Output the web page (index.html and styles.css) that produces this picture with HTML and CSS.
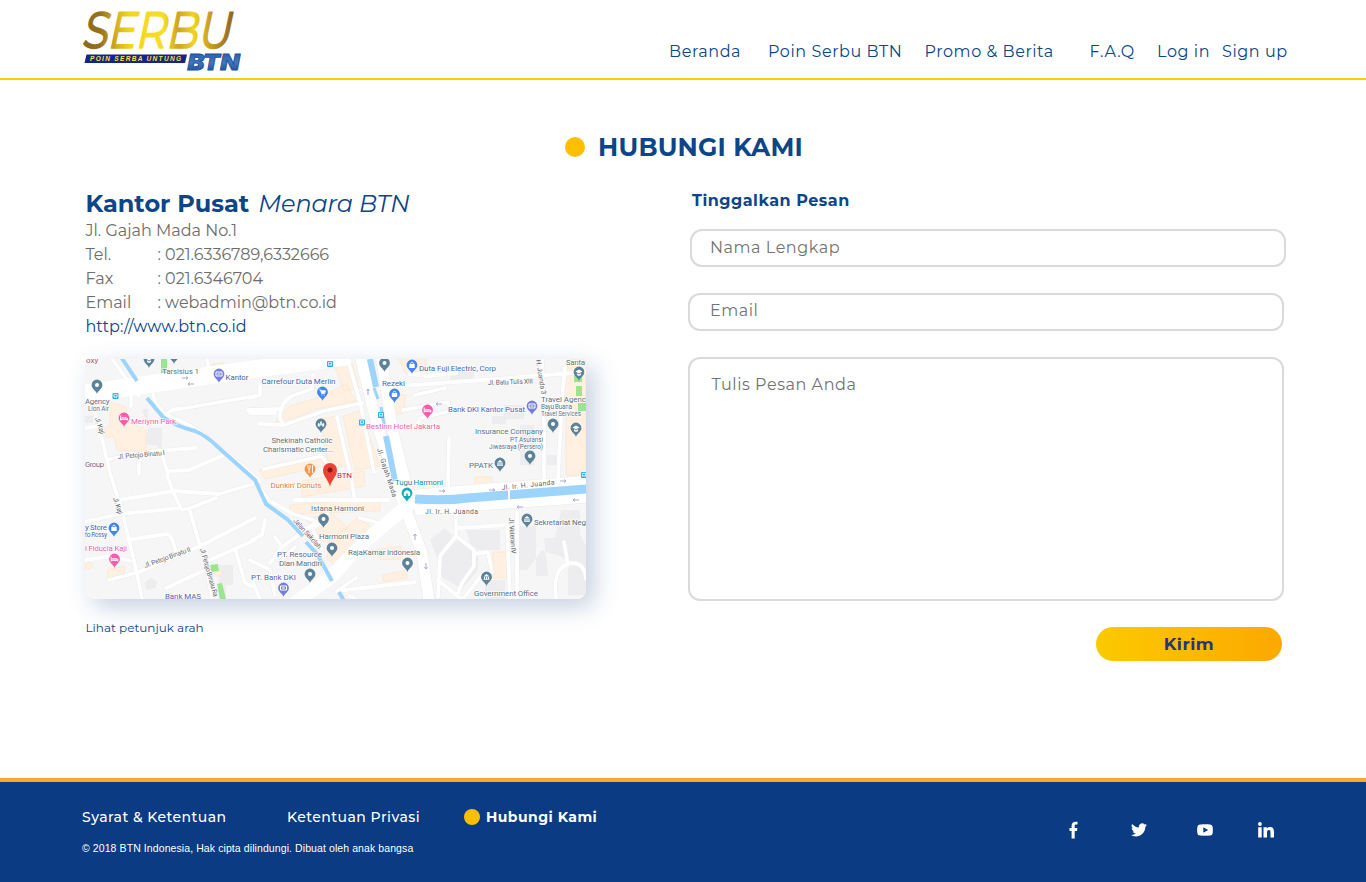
FILE: index.html
```html
<!DOCTYPE html>
<html lang="id">
<head>
<meta charset="utf-8">
<title>Serbu BTN - Hubungi Kami</title>
<link rel="stylesheet" href="styles.css">
</head>
<body>
<header class="header">
  <svg class="logo" width="162" height="66" viewBox="82 8 162 66">
    <defs>
      <linearGradient id="gold" x1="0" x2="1" y1="0.5" y2="0.4">
        <stop offset="0" stop-color="#8a6a18"/><stop offset=".1" stop-color="#96701a"/><stop offset=".22" stop-color="#d9b422"/><stop offset=".3" stop-color="#f3d51c"/>
        <stop offset=".52" stop-color="#f6df25"/><stop offset=".62" stop-color="#d0a41d"/><stop offset=".72" stop-color="#f0d426"/><stop offset=".84" stop-color="#c49a20"/><stop offset="1" stop-color="#8a6220"/>
      </linearGradient>
      <linearGradient id="steel" x1="0" x2="0" y1="0" y2="1"><stop offset="0" stop-color="#2458a8"/><stop offset=".5" stop-color="#3f78bd"/><stop offset="1" stop-color="#173f8a"/></linearGradient>
    </defs>
    <text class="logo-word" transform="translate(81 48) skewX(-12)" textLength="149" lengthAdjust="spacingAndGlyphs" fill="url(#gold)" stroke="url(#gold)">SERBU</text>
    <path d="M86.500 54.500H187l-2 8.500H84.500z" fill="#14248a"/>
    <text class="logo-tag" x="90" y="61" textLength="91">POIN SERBA UNTUNG</text>
    <text class="logo-btn" x="187.500" y="70" textLength="52" lengthAdjust="spacingAndGlyphs" fill="url(#steel)">BTN</text>
  </svg>
  <nav class="nav">
    <a>Beranda</a><a>Poin Serbu BTN</a><a>Promo &amp; Berita</a><a>F.A.Q</a><a>Log in</a><a>Sign up</a>
  </nav>
</header>

<main class="main">
  <h1 class="title"><span class="title-dot"></span><span>HUBUNGI KAMI</span></h1>
  <div class="columns">
    <section class="office">
      <h2 class="office-name"><b>Kantor Pusat</b><i>Menara BTN</i></h2>
      <p class="line">Jl. Gajah Mada No.1</p>
      <div class="line row"><span>Tel.</span><span>: 021.6336789,6332666</span></div>
      <div class="line row"><span>Fax</span><span>: 021.6346704</span></div>
      <div class="line row"><span>Email</span><span>: webadmin@btn.co.id</span></div>
      <a class="line site">http://www.btn.co.id</a>
      <svg class="map" viewBox="85 359 501 240" width="501" height="240">
        <defs>
          <g id="drop"><path d="M0 0C-.8-3.500-5.400-5-5.400-9a5.400 5.400 0 0 1 10.800 0C5.400-5 .8-3.500 0 0z"/></g>
          <g id="poi"><use href="#drop" fill="#5b8299"/><circle cy="-9" r="2" fill="#fff"/></g>
          <g id="office"><use href="#drop" fill="#5b8299"/><path d="M-3-9.500L0-12l3 2.500zM-2.600-9h1.200v2h-1.200zM-.6-9H.6v2H-.6zM1.400-9h1.200v2H1.400zM-3-6.700h6v.8h-6z" fill="#fff"/></g>
          <g id="school"><use href="#drop" fill="#5b8299"/><path d="M-3.500-9.500L0-11.500l3.500 2L0-7.600zM-2-7.700L0-6.500l2-1.200V-6L0-5l-2-1z" fill="#fff"/></g>
          <g id="church"><use href="#drop" fill="#5b8299"/><path d="M-3.200-6.500V-9l1-1.300 1 1.300v2.500zM1.200-6.500V-9l1-1.300 1 1.300v2.500zM-.8-7.500V-11L0-12l.8 1v3.500z" fill="#fff"/></g>
          <g id="shop"><use href="#drop" fill="#4285f4"/><path d="M-2.700-10h5.400v4h-5.400z" fill="#fff"/><path d="M-1.300-9.500v-1a1.300 1.300 0 0 1 2.600 0v1" fill="none" stroke="#fff" stroke-width=".8"/></g>
          <g id="cart"><use href="#drop" fill="#4285f4"/><path d="M-3.300-11.300h1.200l1.200 3.800h3l.9-2.800h-4.600" fill="none" stroke="#fff" stroke-width=".9"/><path d="M-1.500-10h4l-.7 2h-2.700z" fill="#fff"/><circle cx="-.5" cy="-6" r=".6" fill="#fff"/><circle cx="1.800" cy="-6" r=".6" fill="#fff"/></g>
          <g id="bank"><use href="#drop" fill="#7680dc"/><path d="M-3-11h6v4h-6z" fill="none" stroke="#fff"/><path d="M-1.500-9h3" stroke="#fff"/></g>
          <g id="hotel"><use href="#drop" fill="#f45dab"/><path d="M-3.300-11.500v5M3.300-9v2.500M-3.300-7.700h6.600" stroke="#fff"/><path d="M-2.300-9.800h5v1.300h-5z" fill="#fff"/></g>
          <g id="bus"><rect x="-3" y="-3" width="6" height="6" rx="1" fill="#18b4ed"/><path d="M-1.600-1.700h3.200v2.500h-3.200zM-1.500 1.500h.8M.7 1.500h.8" stroke="#fff" stroke-width=".8" fill="none"/></g>
          <path id="arrow" d="M-3 0h6M1-1.500L3 0 1 1.500" stroke="#a5add0" stroke-width="1" fill="none"/>
          <g id="streets" fill="none" stroke-linecap="round" stroke-linejoin="round">
            <path d="M112 359l27 37M167 375l-2-16M209 372l-2-13M131 394v12M153 395q4 14 16 21 22 8 41 23l50 42M168 413q3-4 12-4l75-13M248 410h15M250 413h25M250 398l10-3V386"/>
            <path d="M94 410l6 20 10 43 12 38 14 58 6 30M85 428l14-2M110 459l45-8 41-3M139 460v14M162 455l6 19M169 471l20-1 33-14"/>
            <path d="M119 500l55-9 45 3 34-10M167 475l6 17 9 18 8-2 26-10M190 511l8 28 8 24 6 36M85 522l34-8 61-6M128 540l38-6q4 0 6 5l5 16"/>
            <path d="M109 580l30-8 63-27 53-27M85 560l25-4 20 5M166 588l37-17M210 560l45-20M236 552l9 31 7 3M252 540l10-5 3-15M250 560l20 10 5 25M252 580l8 19M275 537l7 10-12 16M282 547l12-9 10-10M281 561l14-14M292 599l18-9 16-15-4-14-10-8"/>
            <path d="M313 375l-1 14-20 7q-12 6-12 22l2 4M250 410l31-1M259 424l25 1 40-14 38-8M348 360l12 42 14 70M337 417l14 60 4 24M264 469l54-12M320 455l14 16M294 500h95M254 481l16 20 23 13 20 6"/>
            <path d="M388 387l80-6 118-9M410 374l18 2 28-3M403 410l45-8 3 9-30 7-4 6M542 359l2 60v75M565 368l-3 30-4 80M449 438l-1 50M415 395l30-7"/>
            <path d="M456 513v23l18 14v16l-12 17-5 12M456 536l-16 20-2 41M438 580l24 20 24-30M458 528l49-3 3 74M517 512v87M474 554l14-2 4 20M556 599q-4-34 16-36 13 0 14 16M568 565l-4-23M356 578l-19 13 78-9M350 596l5 3"/>
            <path d="M328 520l-16 8 10 21M360 518l30 8M292 540l35-26"/>
          </g>
          <g id="avenues" fill="none" stroke-linecap="round">
            <path d="M360 355l17 70 28 83 17 45 8 55"/><path d="M381 355l12 78 14 55"/><path d="M411 503L365 541l-35 37-38 27" stroke-width="14"/><path d="M405 496l70-6 115-9M420 510l60-5 110-8"/><path d="M82 394l82-12 84-12 102-14" stroke-width="18" stroke-linecap="butt"/>
          </g>
          <clipPath id="frame"><rect x="85" y="359" width="501" height="240"/></clipPath>
        </defs>
        <g clip-path="url(#frame)">
          <rect x="85" y="359" width="501" height="240" fill="#f6f6f6"/>
          <g fill="#ededef"><path d="M85 416h8v7h-8zM142 409h6v22l-6 14h14l6 8V428h-14zM450 368h24v14h-24zM504 405h20v14h-20zM520 425h14v40h-14zM492 416h14v8h-14zM547 455h11v10h-11zM520 526h16v50h12l-4-38h11l6-28h19v24l8 16v45h-20V559l-26-9-15 20h-12zM466 530h34v20h-28zM458 540l20 10v20l-16 19-20-12-1-23zM430 540l15-12 10 10-16 24zM145 582l6-4 6 3-1 7-10 2zM219 565h14v20h-7v14h-8zM485 580h20v19h-20z"/></g>
          <g fill="#fff0e1" stroke="#fce5cc" stroke-width=".7"><path d="M110 402l16 5 2 15 18 8v21h-28l-4-14h-9v-10l5-1zM163 378l30-4-2 13-26 3zM212 364l12-1v7h-12zM335 367l18-3 6 24-15 3zM290 406l30-9 26-13 10 17-40 8-21 9-20 4zM320 419l18-3 13 49-22 4zM343 416l17-5 20 55-25 4zM259 470l63-12 8 7-65 14zM302 481l62-10 1 15-63 11zM290 505l90-7v13l-90 3zM307 518l25-4 16 14-22 14-12-5zM328 543l30-26 17 13-40 35-8-6zM373 550l28-4v13l-20 1zM382 575l25-5v8l-23 4zM569 359h17v116h-20v-75h-6zM475 477h17v11h-17zM493 552h14v26h-14zM107 570l17-4v10l-16 2zM398 359h28v10l-20 5zM392 395h14l-3 18-12 3zM85 561l8 3-3 5h-5zM214 573l8-3v5l-7 1z"/></g>
          <g fill="#9be68d"><path d="M161 359h6v16h-6zM574 373h8v9h-8zM576 386h6v10h-6zM578 403h8v8h-8zM210 565l8-1 1 7-8 1zM217 584l5-1 4 16h-6z"/></g>
          <g stroke="#e8e8ea" stroke-width="4.600"><use href="#streets"/></g>
          <g stroke="#e8e8ea" stroke-width="12"><use href="#avenues"/></g>
          <g stroke="#fff" stroke-width="3.800"><use href="#streets"/></g>
          <g stroke="#fff" stroke-width="11"><use href="#avenues"/></g>
          <path d="M161 359h6v14h-6z" fill="#9be68d"/>
          <g fill="none" stroke="#9cd4fc" stroke-width="4">
            <path d="M121 357l16 24M147 398l16 19q12 9 32 14 12 5 23 16l37 33 11 24 21 15 16 17"/><path d="M306 542l11 12 15 27M339 592l5 9"/><path d="M370 359l6 28M386 436l9 45" stroke-width="6"/><path d="M374 388l4 11M381 407l4 22" stroke-width="3"/><path d="M415 499q30 2 53-1l119-9" stroke-width="9"/>
          </g>
          <path d="M509 488v15" stroke="#fff" stroke-width="2"/>
          <use href="#arrow" x="185" y="378"/><use href="#arrow" transform="translate(191 384) rotate(180)"/><use href="#arrow" transform="translate(368 392) rotate(-90)"/><use href="#arrow" x="442" y="491"/><use href="#arrow" x="492" y="490"/><use href="#arrow" x="563" y="481"/><use href="#arrow" transform="translate(520 507) rotate(180)"/><use href="#arrow" transform="translate(576 500) rotate(180)"/><use href="#arrow" transform="translate(415 537) rotate(-90)"/><use href="#arrow" transform="translate(426 566) rotate(90)"/><use href="#arrow" transform="translate(439 404) rotate(180)"/>
          <use href="#poi" x="97" y="394"/><use href="#school" x="149" y="368"/><use href="#school" x="174" y="364"/><use href="#bank" x="219" y="383"/><use href="#hotel" x="124" y="427"/><use href="#bus" x="115.500" y="396"/><use href="#bus" x="330" y="364"/><use href="#bus" x="381" y="415"/><use href="#bus" x="362" y="422.500"/><use href="#bus" x="584" y="475"/>
          <use href="#cart" x="322.500" y="401"/><use href="#shop" x="394.500" y="403"/><use href="#poi" x="384.500" y="372"/><use href="#shop" x="412" y="374"/><use href="#hotel" x="427.500" y="419"/><use href="#church" x="321" y="433"/><use href="#bank" x="532" y="415"/><use href="#school" x="579" y="381"/><use href="#poi" x="553" y="433"/><use href="#school" x="576" y="437"/><use href="#poi" x="530" y="465"/><use href="#office" x="500" y="472"/>
          <use href="#shop" x="114" y="537"/><use href="#hotel" x="114.500" y="568"/><use href="#poi" x="323.500" y="528"/><use href="#poi" x="332" y="557"/><use href="#poi" x="310" y="583"/><use href="#bank" x="283.500" y="597"/><use href="#poi" x="407.500" y="572"/><use href="#office" x="527" y="528"/><use href="#office" x="486.500" y="586"/>
          <use href="#drop" x="310" y="478" fill="#f79448"/><path d="M308 465v3q0 1 1 1v4M310 465v3q0 1-1 1M312.500 465v8" stroke="#fff" stroke-width=".9" fill="none"/>
          <use href="#drop" x="407" y="502" fill="#10aab8"/><path d="M403.800 492l3.200-2 3.200 2v4h-6.400z" fill="#fff"/><path d="M406.200 493.500h1.600v2.500h-1.600z" fill="#10aab8"/>
          <path d="M330 487c-1-7-7-10-7-17a7 7 0 0 1 14 0c0 7-6 10-7 17z" fill="#ea4335"/><circle cx="330" cy="470" r="2.500" fill="#831a14"/>
          <g class="labels">
            <text x="86" y="363" fill="#c0506a">oxy</text>
            <text x="162" y="373.500" textLength="37">Tarsisius 1</text>
            <text x="225.500" y="379.500" textLength="23" fill="#5058a8">Kantor</text>
            <text x="85" y="404" textLength="24.500">Agency</text><text class="small" x="88" y="411" textLength="21">Lion Air</text>
            <text x="131" y="424" textLength="45" fill="#f45dab">Merlynn Park</text>
            <text x="85" y="467" textLength="19">Group</text>
            <text x="261.500" y="383.500" textLength="74" fill="#3d68b8">Carrefour Duta Merlin</text>
            <text x="382" y="386" textLength="23" fill="#3d68b8">Rezeki</text>
            <text x="419" y="371" textLength="77" fill="#3d68b8">Duta Fuji Electric, Corp</text>
            <text class="road" x="488" y="385" textLength="45" transform="rotate(-2 488 385)">Jl. Batu Tulis XIII</text>
            <text class="road" x="536" y="360" textLength="35" transform="rotate(81 536 360)">H. Juanda 3</text>
            <text x="566" y="364.500" textLength="19">Santa</text>
            <text x="541" y="402" textLength="45">Travel Agenc</text><text class="small" x="541" y="409" textLength="31">Bayu Buana</text><text class="small" x="541" y="416" textLength="40">Travel Services</text>
            <text x="448" y="411.500" textLength="77" fill="#5961b4">Bank DKI Kantor Pusat</text>
            <text x="366" y="429" textLength="74" fill="#f45dab">Bestinn Hotel Jakarta</text>
            <text x="475" y="434" textLength="68">Insurance Company</text><text class="small" x="510" y="441.500" textLength="33">PT Asuransi</text><text class="small" x="489" y="448.500" textLength="54">Jiwasraya (Persero)</text>
            <text x="469" y="468" textLength="24">PPATK</text>
            <text x="271.500" y="442.500" textLength="61">Shekinah Catholic</text><text x="263" y="451.500" textLength="70">Charismatic Center...</text>
            <text x="337" y="478" textLength="15" fill="#c5283c">BTN</text><text x="270.500" y="488" textLength="51" fill="#df7c45">Dunkin' Donuts</text>
            <text x="395" y="485" textLength="48" fill="#168b96">Tugu Harmoni</text>
            <text class="road" x="502" y="490" textLength="53" transform="rotate(-6 502 490)">Jl. Ir. H. Juanda</text><text class="road" x="425" y="513.500" textLength="53">Jl. Ir. H. Juanda</text>
            <text x="311" y="510.500" textLength="53">Istana Harmoni</text><text x="319" y="539" textLength="50">Harmoni Plaza</text>
            <text x="277" y="557" textLength="45">PT. Resource</text><text x="279" y="565.500" textLength="43">Dian Mandiri</text><text x="251" y="580" textLength="45" fill="#5961b4">PT. Bank DKI</text>
            <text x="348" y="555" textLength="72">RajaKamar Indonesia</text><text x="534" y="524.500" textLength="52">Sekretariat Neg</text><text x="474" y="595.500" textLength="64">Government Office</text>
            <text x="85" y="529.500" textLength="22" fill="#3d68b8">y Store</text><text class="small" x="85" y="537" textLength="22" fill="#3d68b8">to Rossy</text><text x="85" y="550.500" textLength="42" fill="#f45dab">l Fiducia Kaji</text><text x="165" y="599" textLength="36" fill="#5961b4">Bank MAS</text>
            <text class="road" x="118" y="459" textLength="47" transform="rotate(-5 118 459)">Jl. Petojo Binatu I</text><text class="road" x="145" y="568" textLength="49" transform="rotate(-20 145 568)">Jl. Petojo Binatu II</text>
            <text class="road" x="200" y="549" textLength="50" transform="rotate(74 200 549)">Jl. Petojo Binatu Ra</text>
            <text class="road" x="95" y="418" textLength="17.500" transform="rotate(72 95 418)">Jl. Kaji</text><text class="road" x="113" y="498" textLength="17.500" transform="rotate(72 113 498)">Jl. Kaji</text>
            <text class="road" x="377" y="449" textLength="51" transform="rotate(72 377 449)">Jl. Gajah Mada</text><text class="road" x="293" y="521" textLength="38" transform="rotate(48 293 521)">Jalan Sekolah</text><text class="road" x="509" y="518" textLength="36" transform="rotate(86 509 518)">Jl. Veteran IV</text>
          </g>
        </g>
      </svg>
      <a class="directions">Lihat petunjuk arah</a>
    </section>

    <form class="form">
      <label class="form-title">Tinggalkan Pesan</label>
      <input class="field field-name" placeholder="Nama Lengkap">
      <input class="field" placeholder="Email">
      <textarea class="field message" placeholder="Tulis Pesan Anda"></textarea>
      <button class="send" type="button">Kirim</button>
    </form>
  </div>
</main>

<footer class="footer">
  <div>
    <div class="footer-links"><a>Syarat &amp; Ketentuan</a><a>Ketentuan Privasi</a><a class="current"><span class="dot"></span>Hubungi Kami</a></div>
    <p class="copyright">© 2018 BTN Indonesia, Hak cipta dilindungi. Dibuat oleh anak bangsa</p>
  </div>
  <div class="social">
    <svg width="10" height="18" viewBox="0 0 10 18"><path d="M2.600 17.500V10H.5V7h2.100V4.700C2.600 2 4.200.7 6.500.7c1 0 1.700.1 2 .1v2.700H7c-1.100 0-1.300.6-1.300 1.400V7h2.700L8 10H5.700v7.500z"/></svg>
    <svg width="16" height="14" viewBox="0 0 24 20"><path d="M24 2.400c-.9.400-1.800.7-2.800.8 1-.6 1.800-1.600 2.200-2.700-1 .6-2 1-3.100 1.200A4.900 4.900 0 0 0 11.900 6.200C7.800 6 4.200 4 1.700 1A4.900 4.900 0 0 0 3.200 7.600c-.8 0-1.600-.2-2.200-.6 0 2.300 1.600 4.400 3.900 4.900-.7.200-1.500.2-2.200.1.600 2 2.400 3.400 4.600 3.400A9.900 9.900 0 0 1 0 17.500C2.200 18.900 4.800 19.700 7.500 19.700c9.100 0 14.300-7.700 14-14.600.9-.8 1.800-1.700 2.500-2.700z"/></svg>
    <svg width="16" height="12" viewBox="0 0 16 12"><path fill-rule="evenodd" d="M3 .4C8 0 10 .1 13 .4q2.500.1 2.700 2.600.3 3 0 6-.2 2.500-2.700 2.600-5 .3-10 0Q.5 11.500.3 9q-.3-3 0-6Q.5.500 3 .4zM6.300 3.200v5.600L11.200 6z"/></svg>
    <svg width="16" height="16" viewBox="0 0 16 16"><circle cx="1.900" cy="2" r="1.900"/><path d="M.2 5.300h3.500v10.200H.2zM5.500 5.300h3.400v1.300c.5-.9 1.600-1.600 3.100-1.600 3.300 0 4 2.200 4 5v5.500h-3.500v-4.900c0-1.300 0-2.700-1.600-2.700S9 9.200 9 10.600v4.900H5.500z"/></svg>
  </div>
</footer>
</body>
</html>
```
FILE: styles.css
```css
* { box-sizing: border-box; }
body { margin: 0; background: #fff; color: #0c4588; font-family: "Montserrat", Inter, "Liberation Sans", sans-serif; }
h1, h2, p { margin: 0; }

.header { display: flex; justify-content: space-between; align-items: flex-start; height: 80px; padding: 8px 76px 0 82px; border-bottom: 2px solid #fdd000; }
.logo { display: block; overflow: visible; }
.logo-word { font-size: 51px; font-weight: 400; stroke-width: 1.600px; stroke-linejoin: round; }
.logo-tag { font: italic bold 6.500px "Liberation Sans", sans-serif; fill: #ffe32e; }
.logo-btn { font: italic 900 21px Inter, sans-serif; stroke: #1f4f9c; stroke-width: .8px; }
.nav { display: grid; grid-template-columns: 99px 156.500px 165px 67.500px 65px 68px; padding-top: 32px; font-size: 16px; line-height: 24px; letter-spacing: .58px; white-space: nowrap; }

.main { height: 698px; padding: 51px 80px 0 85px; }
.title { display: flex; justify-content: center; align-items: center; gap: 13px; height: 32px; margin-right: 3px; font-size: 25px; font-weight: 700; letter-spacing: .2px; }
.title-dot { width: 20px; height: 20px; border-radius: 50%; background: #fdbf00; }
.columns { display: grid; grid-template-columns: 502px 598px; column-gap: 101px; margin-top: 27px; }
.office { display: flex; flex-direction: column; align-items: flex-start; }
.office-name { display: flex; gap: 9px; height: 29px; padding-left: .5px; font-size: 24px; line-height: 28px; white-space: nowrap; }
.office-name b { font-weight: 700; }
.office-name i { font-weight: 400; letter-spacing: -.15px; }
.line { height: 24px; padding-left: .5px; line-height: 24px; font-size: 16px; color: #6d6d6d; }
.row { display: grid; grid-template-columns: 72px auto; }
.site { color: #0c4588; }
.map { display: block; margin-top: 20px; border-radius: 4px 4px 9px 9px; box-shadow: 8px 8px 24px rgba(30, 75, 140, .26); }
.labels { font-family: Roboto, sans-serif; font-size: 8px; fill: #587184; stroke: #fff; stroke-width: 1.400px; paint-order: stroke; stroke-opacity: .75; }
.labels .small { font-size: 6.500px; }
.labels .road { font-size: 6.800px; fill: #606267; }
.directions { margin-top: 19.500px; padding-left: .5px; font-size: 12px; line-height: 18px; }

.form { display: flex; flex-direction: column; align-items: flex-start; }
.form-title { height: 21px; margin: 0 0 18px 4px; font-size: 16px; line-height: 21px; font-weight: 700; letter-spacing: .5px; }
.field { display: block; width: 596px; height: 38px; margin: 0 0 26px; padding: 0 20px 3px; border: 2px solid #dadada; border-radius: 12px; background: #fff; font: 400 16px/20px "Montserrat", Inter, sans-serif; letter-spacing: .55px; outline: 0; }
.field-name { margin-left: 2px; padding: 0 18px 1px; }
.field::placeholder { color: #737373; opacity: 1; }
.message { height: 244px; padding: 16px 21px 16px 21.500px; resize: none; }
.send { width: 186px; height: 34px; margin-left: 408px; padding: 0; border: 0; border-radius: 17px; background: linear-gradient(90deg, #fbca00, #fca800); color: #29347a; font: 700 17px "Montserrat", Inter, sans-serif; letter-spacing: .5px; }

.footer { display: flex; justify-content: space-between; height: 104px; padding: 0 92px 0 82px; border-top: 4px solid #ffa726; background: #0b3b82; color: #fff; }
.footer-links { display: grid; grid-template-columns: 205px 177px auto; padding-top: 25px; font-size: 14px; font-weight: 500; line-height: 20px; letter-spacing: .47px; white-space: nowrap; }
.current { display: flex; align-items: center; gap: 6px; font-weight: 700; }
.dot { width: 16px; height: 16px; border-radius: 50%; background: #fdbf00; }
.copyright { margin-top: 14px; font: 10.500px/14px "Liberation Sans", sans-serif; letter-spacing: .09px; }
.social { display: grid; grid-template-columns: 62px 66px 61px 16px; align-items: center; height: 96px; fill: #fff; }
.social svg { display: block; }
```
